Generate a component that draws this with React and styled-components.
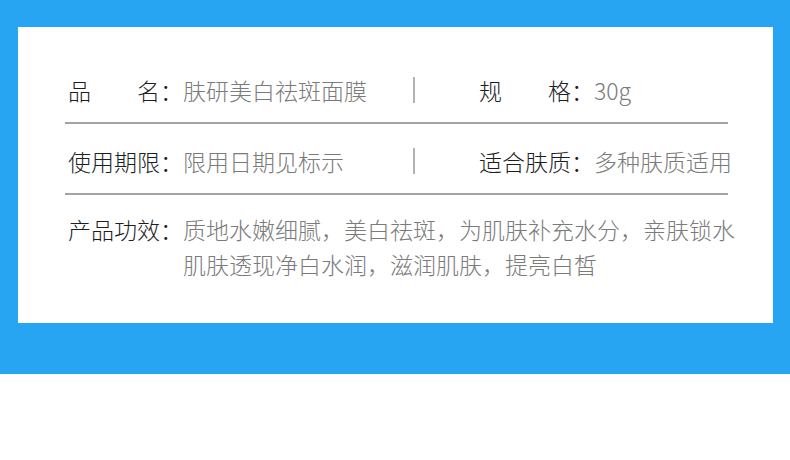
import styled, { createGlobalStyle } from "styled-components";

const GlobalStyle = createGlobalStyle`
  body {
    margin: 0;
    background: #ffffff;
    font-family: "Noto Sans CJK SC", "Noto Sans", sans-serif;
  }
`;

const specs = [
  [
    { label: "品　　名：", value: "肤研美白祛斑面膜" },
    { label: "规　　格：", value: "30g" },
  ],
  [
    { label: "使用期限：", value: "限用日期见标示" },
    { label: "适合肤质：", value: "多种肤质适用" },
  ],
];

const effect =
  "质地水嫩细腻，美白祛斑，为肌肤补充水分，亲肤锁水肌肤透现净白水润，滋润肌肤，提亮白皙";

const Band = styled.section`
  background: #27a4f2;
  height: 374px;
  padding: 27px 17px 0 18px;
  box-sizing: border-box;
`;

const Card = styled.div`
  background: #ffffff;
  height: 296px;
  padding: 26px 45px 0 47px;
  box-sizing: border-box;
`;

const Row = styled.div`
  display: flex;
  align-items: center;
  padding: 22px 0 17px;
  border-bottom: 2px solid #a3a3a3;
`;

const Cell = styled.div`
  display: flex;
  align-items: center;
  flex: none;
  white-space: nowrap;
  font-size: 23px;
  line-height: 30px;
  padding-left: ${(props) => props.$indent}px;
  width: ${(props) => (props.$width ? `${props.$width}px` : "auto")};
  box-sizing: border-box;
`;

const Divider = styled.span`
  width: 2px;
  height: 26px;
  background: #b3b3b3;
  flex: none;
`;

const Label = styled.span`
  color: #1e1e1e;
  font-weight: 300;
  flex: none;
`;

const Value = styled.span`
  color: #7b7b7b;
  font-weight: 300;
`;

const EffectRow = styled.div`
  display: flex;
  align-items: flex-start;
  padding: 17px 0 0 3px;
  font-size: 23px;
  line-height: 35px;
`;

const Desc = styled(Value)`
  width: 560px;
  flex: none;
`;

function App() {
  return (
    <>
      <GlobalStyle />
      <Band>
        <Card>
          {specs.map((row) => (
            <Row key={row[0].label}>
              <Cell $indent={3} $width={348}>
                <Label>{row[0].label}</Label>
                <Value>{row[0].value}</Value>
              </Cell>
              <Divider />
              <Cell $indent={64}>
                <Label>{row[1].label}</Label>
                <Value>{row[1].value}</Value>
              </Cell>
            </Row>
          ))}
          <EffectRow>
            <Label>产品功效：</Label>
            <Desc>{effect}</Desc>
          </EffectRow>
        </Card>
      </Band>
    </>
  );
}

export default App;
